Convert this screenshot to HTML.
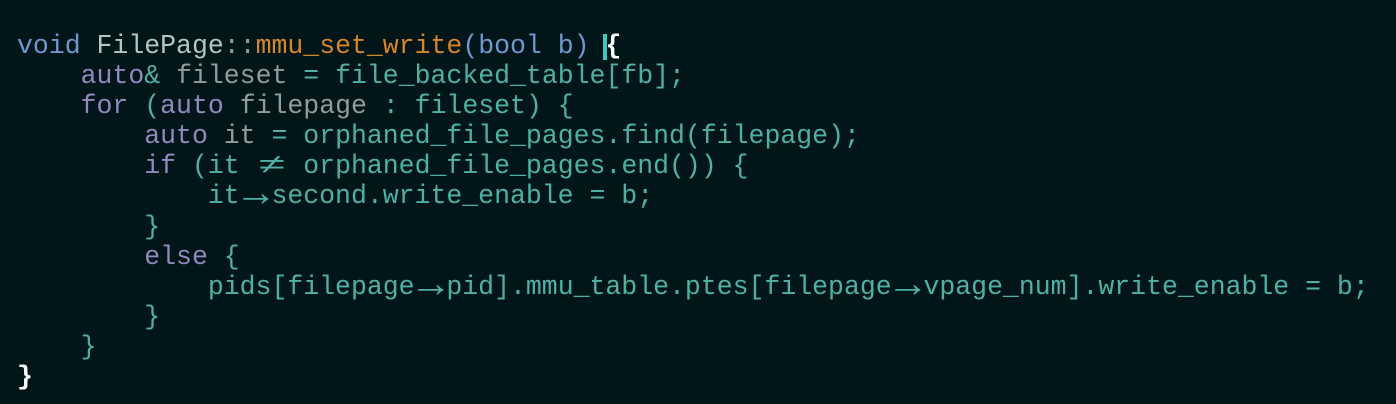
<!DOCTYPE html>
<html><head><meta charset="utf-8"><style>
html,body{margin:0;padding:0;background:#021519;width:1396px;height:404px;overflow:hidden}
pre{margin:0;position:absolute;left:17px;top:31px;font-family:"Liberation Mono",monospace;font-size:26.5px;line-height:30.1px;color:#4fb0a5;letter-spacing:0}
.k{color:#9089bd}.t{color:#6e98cf}.c{color:#b4c6c2}.f{color:#d5852b}.v{color:#8f9e9c}.w{color:#fff;font-weight:bold}
.cur{display:inline-block;position:relative}
.cur:before{content:"";position:absolute;left:-2px;top:3px;width:4px;height:26px;background:#3ec9c0}
.l{display:inline-block;width:2ch;text-align:center;line-height:1}
.l i{font-style:normal;display:inline-block;transform:scaleX(1.8)}
.l b{font-weight:normal;display:inline-block;transform:translateY(-1px) scale(1.6,1.5)}
</style></head><body><pre><span class="t">void</span> <span class="c">FilePage</span><span class="v">::</span><span class="f">mmu_set_write</span><span class="t">(bool b)</span> <span class="cur w">{</span>
    <span class="k">auto</span>&amp; <span class="v">fileset</span> = file_backed_table[fb];
    <span class="k">for</span> (<span class="k">auto</span> <span class="v">filepage</span> : fileset) {
        <span class="k">auto</span> <span class="v">it</span> = orphaned_file_pages.find(filepage);
        <span class="k">if</span> (it <span class="l"><i>≠</i></span> orphaned_file_pages.end()) {
            it<span class="l"><b>→</b></span>second.write_enable = b;
        }
        <span class="k">else</span> {
            pids[filepage<span class="l"><b>→</b></span>pid].mmu_table.ptes[filepage<span class="l"><b>→</b></span>vpage_num].write_enable = b;
        }
    }
<span class="w">}</span></pre></body></html>
